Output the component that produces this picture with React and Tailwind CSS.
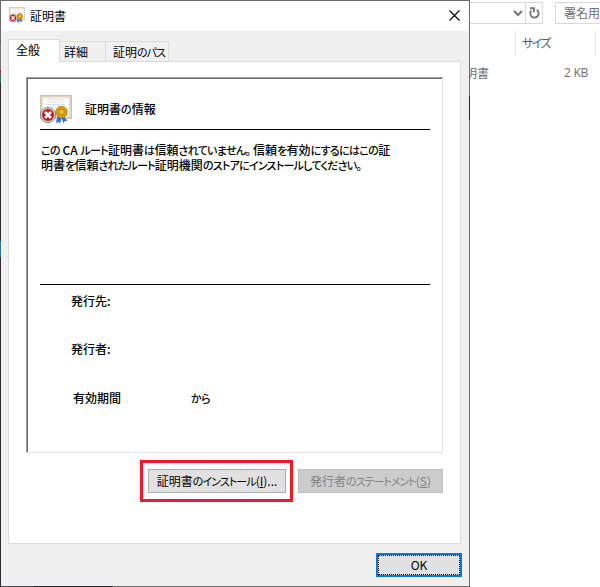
import React from 'react';

// Kana are set smaller and tighter than kanji, as in a Windows UI font
function JpText({ children, kana = 'text-[11px] tracking-[-0.6px]' }) {
  const runs = children.match(/[\u3001-\u30ff]+|[^\u3001-\u30ff]+/g) || [];
  return runs.map((run, i) => (
    <span key={i} className={/[\u3001-\u30ff]/.test(run) ? kana : ''}>{run}</span>
  ));
}

function CertIcon({ className }) {
  return (
    <svg className={className} viewBox="0 0 32 29" preserveAspectRatio="none">
      <rect x="0.5" y="0.5" width="31" height="23" fill="#e6dccb" stroke="#d3c8b6" />
      <rect x="0.7" y="0.7" width="30.6" height="22.6" fill="none" stroke="#b3a792" strokeWidth="0.6" strokeDasharray="1 1" />
      <rect x="3" y="3" width="26" height="18" fill="#fcfcfb" />
      <path d="M7 4.500h18M9 7h14M7 9.500h18M12 12h8" stroke="#ccd3e0" strokeWidth="0.8" strokeDasharray="2 .5" />
      <path d="M17.500 20l-1.500 8 2.500-1 1.500 1.500 2-7zM23 20l4.500 6-3 0-1 2.500-2.500-7z" fill="#2c74dd" />
      <circle cx="21.500" cy="17" r="5.800" fill="#d99d12" stroke="#b67c0a" strokeWidth="0.700" />
      <circle cx="21.500" cy="17" r="2.800" fill="#eebc3b" stroke="#b67c0a" strokeWidth="0.800" />
      <circle cx="8" cy="20" r="7.600" fill="#d4d4d4" stroke="#7d7d7d" strokeWidth="0.900" />
      <circle cx="8" cy="20" r="6" fill="#c01a20" />
      <path d="M5 17l6 6M11 17l-6 6" stroke="#fff" strokeWidth="2.600" />
    </svg>
  );
}

function Explorer() {
  return (
    <div className="w-[130px] text-[12px] text-[#6d6d6d]">
      <div className="flex h-[22px] pt-[2px] leading-[20px]">
        <div className="flex h-[22px] w-[73px] border border-l-0 border-[#d9d9d9]">
          <div className="flex flex-1 items-center justify-end pr-[2px]">
            <svg className="h-[8px] w-[10px]" viewBox="0 0 10 8" fill="none" stroke="#777" strokeWidth="2">
              <path d="M1 2l4 4 4-4" />
            </svg>
          </div>
          <div className="flex w-[17px] items-center justify-center border-l border-[#d9d9d9]">
            <svg className="h-[12px] w-[11px]" viewBox="0 0 11 12" fill="none" stroke="#777" strokeWidth="1.900">
              <path d="M2.300 3.600A4.200 4.200 0 1 0 7.800 2.900M1 1.300H5V5.200" />
            </svg>
          </div>
        </div>
        <div className="ml-3 h-[22px] flex-1 overflow-hidden whitespace-nowrap border border-r-0 border-[#d9d9d9] pl-2">署名用</div>
      </div>
      <div className="mt-[9px] flex h-[25px] leading-[23px] text-[#4c607a]">
        <div className="w-[46px] border-r border-[#e5e5e5]"></div>
        <div className="w-[80px] border-r border-[#e5e5e5] pl-[6px]"><JpText kana="tracking-[-1.600px]">サイズ</JpText></div>
      </div>
      <div className="mt-[8px] flex h-[18px] justify-between pr-[12px] leading-[18px]">
        <div className="flex w-[19px] justify-end overflow-hidden whitespace-nowrap">明書</div>
        <div className="font-['Open_Sans',sans-serif] tracking-[-0.300px] leading-[17px]">2 KB</div>
      </div>
    </div>
  );
}

export default function App() {
  return (
    <div className="flex h-[587px] w-[600px] overflow-hidden bg-white font-['Noto_Sans_CJK_JP',sans-serif] text-[12px] text-black [font-feature-settings:'palt']">
      {/* Left edge of the window, over a dark desktop */}
      <div className="flex w-px flex-col">
        <div className="h-[44px] bg-[#6b6b6b]"></div>
        <div className="h-[26px] bg-[#77777b]"></div>
        <div className="h-[3px] bg-[#b0202c]"></div>
        <div className="h-[10px] bg-[#2f6f5a]"></div>
        <div className="flex-1 bg-[#2d2d32]"></div>
        <div className="h-[16px] bg-[#2a77a0]"></div>
        <div className="h-[330px] bg-[#2d2d32]"></div>
      </div>
      <div className="flex w-[468px] flex-col border-t border-[#6b6b6b] bg-[#f0f0f0]">
        {/* Title bar */}
        <div className="flex h-[30px] items-center bg-white pl-2">
          <CertIcon className="mt-[-2px] h-[16px] w-[16px]" />
          <span className="ml-[5px] mt-[-1px] flex-1">証明書</span>
          <svg className="mr-[9px] mt-[-2px] h-[11px] w-[11px]" viewBox="0 0 11 11" stroke="#000" strokeWidth="1.100">
            <path d="M.5.5l10 10M10.500.5l-10 10" />
          </svg>
        </div>

        {/* Tabs */}
        <div className="mt-[8px] flex h-[22px] items-end pl-[7px]">
          <div className="z-10 -mb-px h-[23px] w-[52px] border border-b-0 border-[#dcdcdc] bg-white pl-[7px] leading-[20px]">全般</div>
          <div className="h-[20px] w-[46px] border border-b-0 border-l-0 border-[#dcdcdc] pl-[4px] leading-[20px]">詳細</div>
          <div className="h-[20px] w-[63px] overflow-hidden whitespace-nowrap border border-b-0 border-l-0 border-[#dcdcdc] pl-[7px] leading-[20px]"><JpText kana="text-[11px] tracking-[-1px]">証明のパス</JpText></div>
        </div>

        <div className="ml-[7px] h-[483px] w-[453px] border border-[#dcdcdc] bg-white pl-[17px] pt-[15px]">
          <div className="h-[376px] w-[417px] border border-b-[#e3e3e3] border-l-[#a0a0a0] border-r-[#e3e3e3] border-t-[#a0a0a0]">
            <div className="h-full border-l border-t border-[#696969] px-[12px] pt-[16px] font-medium">
              <div className="flex h-[35px] w-[390px] border-b border-black">
                <CertIcon className="h-[29px] w-[32px]" />
                <span className="ml-[13px] mt-[5px] leading-[18px]"><JpText kana="text-[11px]">証明書の情報</JpText></span>
              </div>
              <div className="h-[155px] w-[390px] whitespace-nowrap border-b border-black pl-px pt-[12px] leading-[15px]">
                <p className="h-[15px]"><JpText kana="text-[11px] tracking-[-0.660px]">この CA ルート証明書は信頼されていません。 信頼を有効にするにはこの証</JpText></p>
                <p className="h-[15px]"><JpText kana="text-[11px] tracking-[-0.750px]">明書を信頼されたルート証明機関のストアにインストールしてください。</JpText></p>
              </div>
              <div className="pl-[31px] pt-[7px] leading-[18px]">
                <p>発行先:</p>
                <p className="mt-[30px]">発行者:</p>
                <div className="ml-[2px] mt-[31px] flex">
                  <span className="w-[54px]">有効期間</span>
                  <span className="mr-[63px] mt-[12px] h-px w-px bg-[#d9c7a0]"></span>
                  <JpText>から</JpText>
                </div>
              </div>
            </div>
          </div>

          <div className="mt-[7px] flex">
            <div className="ml-[114px] h-[42px] w-[153px] border-3 border-[#ed1c24] p-[6px] pl-[5px]">
              <button className="block h-[24px] w-[138px] whitespace-nowrap border border-[#adadad] bg-[#e1e1e1] leading-[21px]">
                <JpText kana="text-[11px] tracking-[-0.900px]">証明書のインストール</JpText>(<u>I</u>)...
              </button>
            </div>
            <button className="ml-[5px] mt-[9px] h-[24px] w-[145px] whitespace-nowrap border border-[#bfbfbf] bg-[#cccccc] leading-[21px] text-[#838383]">
              <JpText kana="text-[11px] tracking-[-1px]">発行者のステートメント</JpText>(<u>S</u>)
            </button>
          </div>
        </div>

        <div className="mt-[9px] flex justify-end pr-[7px]">
          <button className="h-[24px] w-[86px] border-2 border-[#0078d7] bg-[#e1e1e1]">
            <span className="block h-full border border-dotted border-black leading-[17px]">OK</span>
          </button>
        </div>

        <div className="mt-auto flex h-px">
          <div className="w-[33px] bg-[#4a4a4d]"></div>
          <div className="w-[79px] bg-[#252527]"></div>
          <div className="flex-1 bg-[#6b6b6b]"></div>
        </div>
      </div>
      <div className="flex w-px flex-col">
        <div className="h-[96px] bg-[#6b6b6b]"></div>
        <div className="h-[24px] bg-[#222]"></div>
        <div className="flex-1 bg-[#6b6b6b]"></div>
      </div>
      <Explorer />
    </div>
  );
}
